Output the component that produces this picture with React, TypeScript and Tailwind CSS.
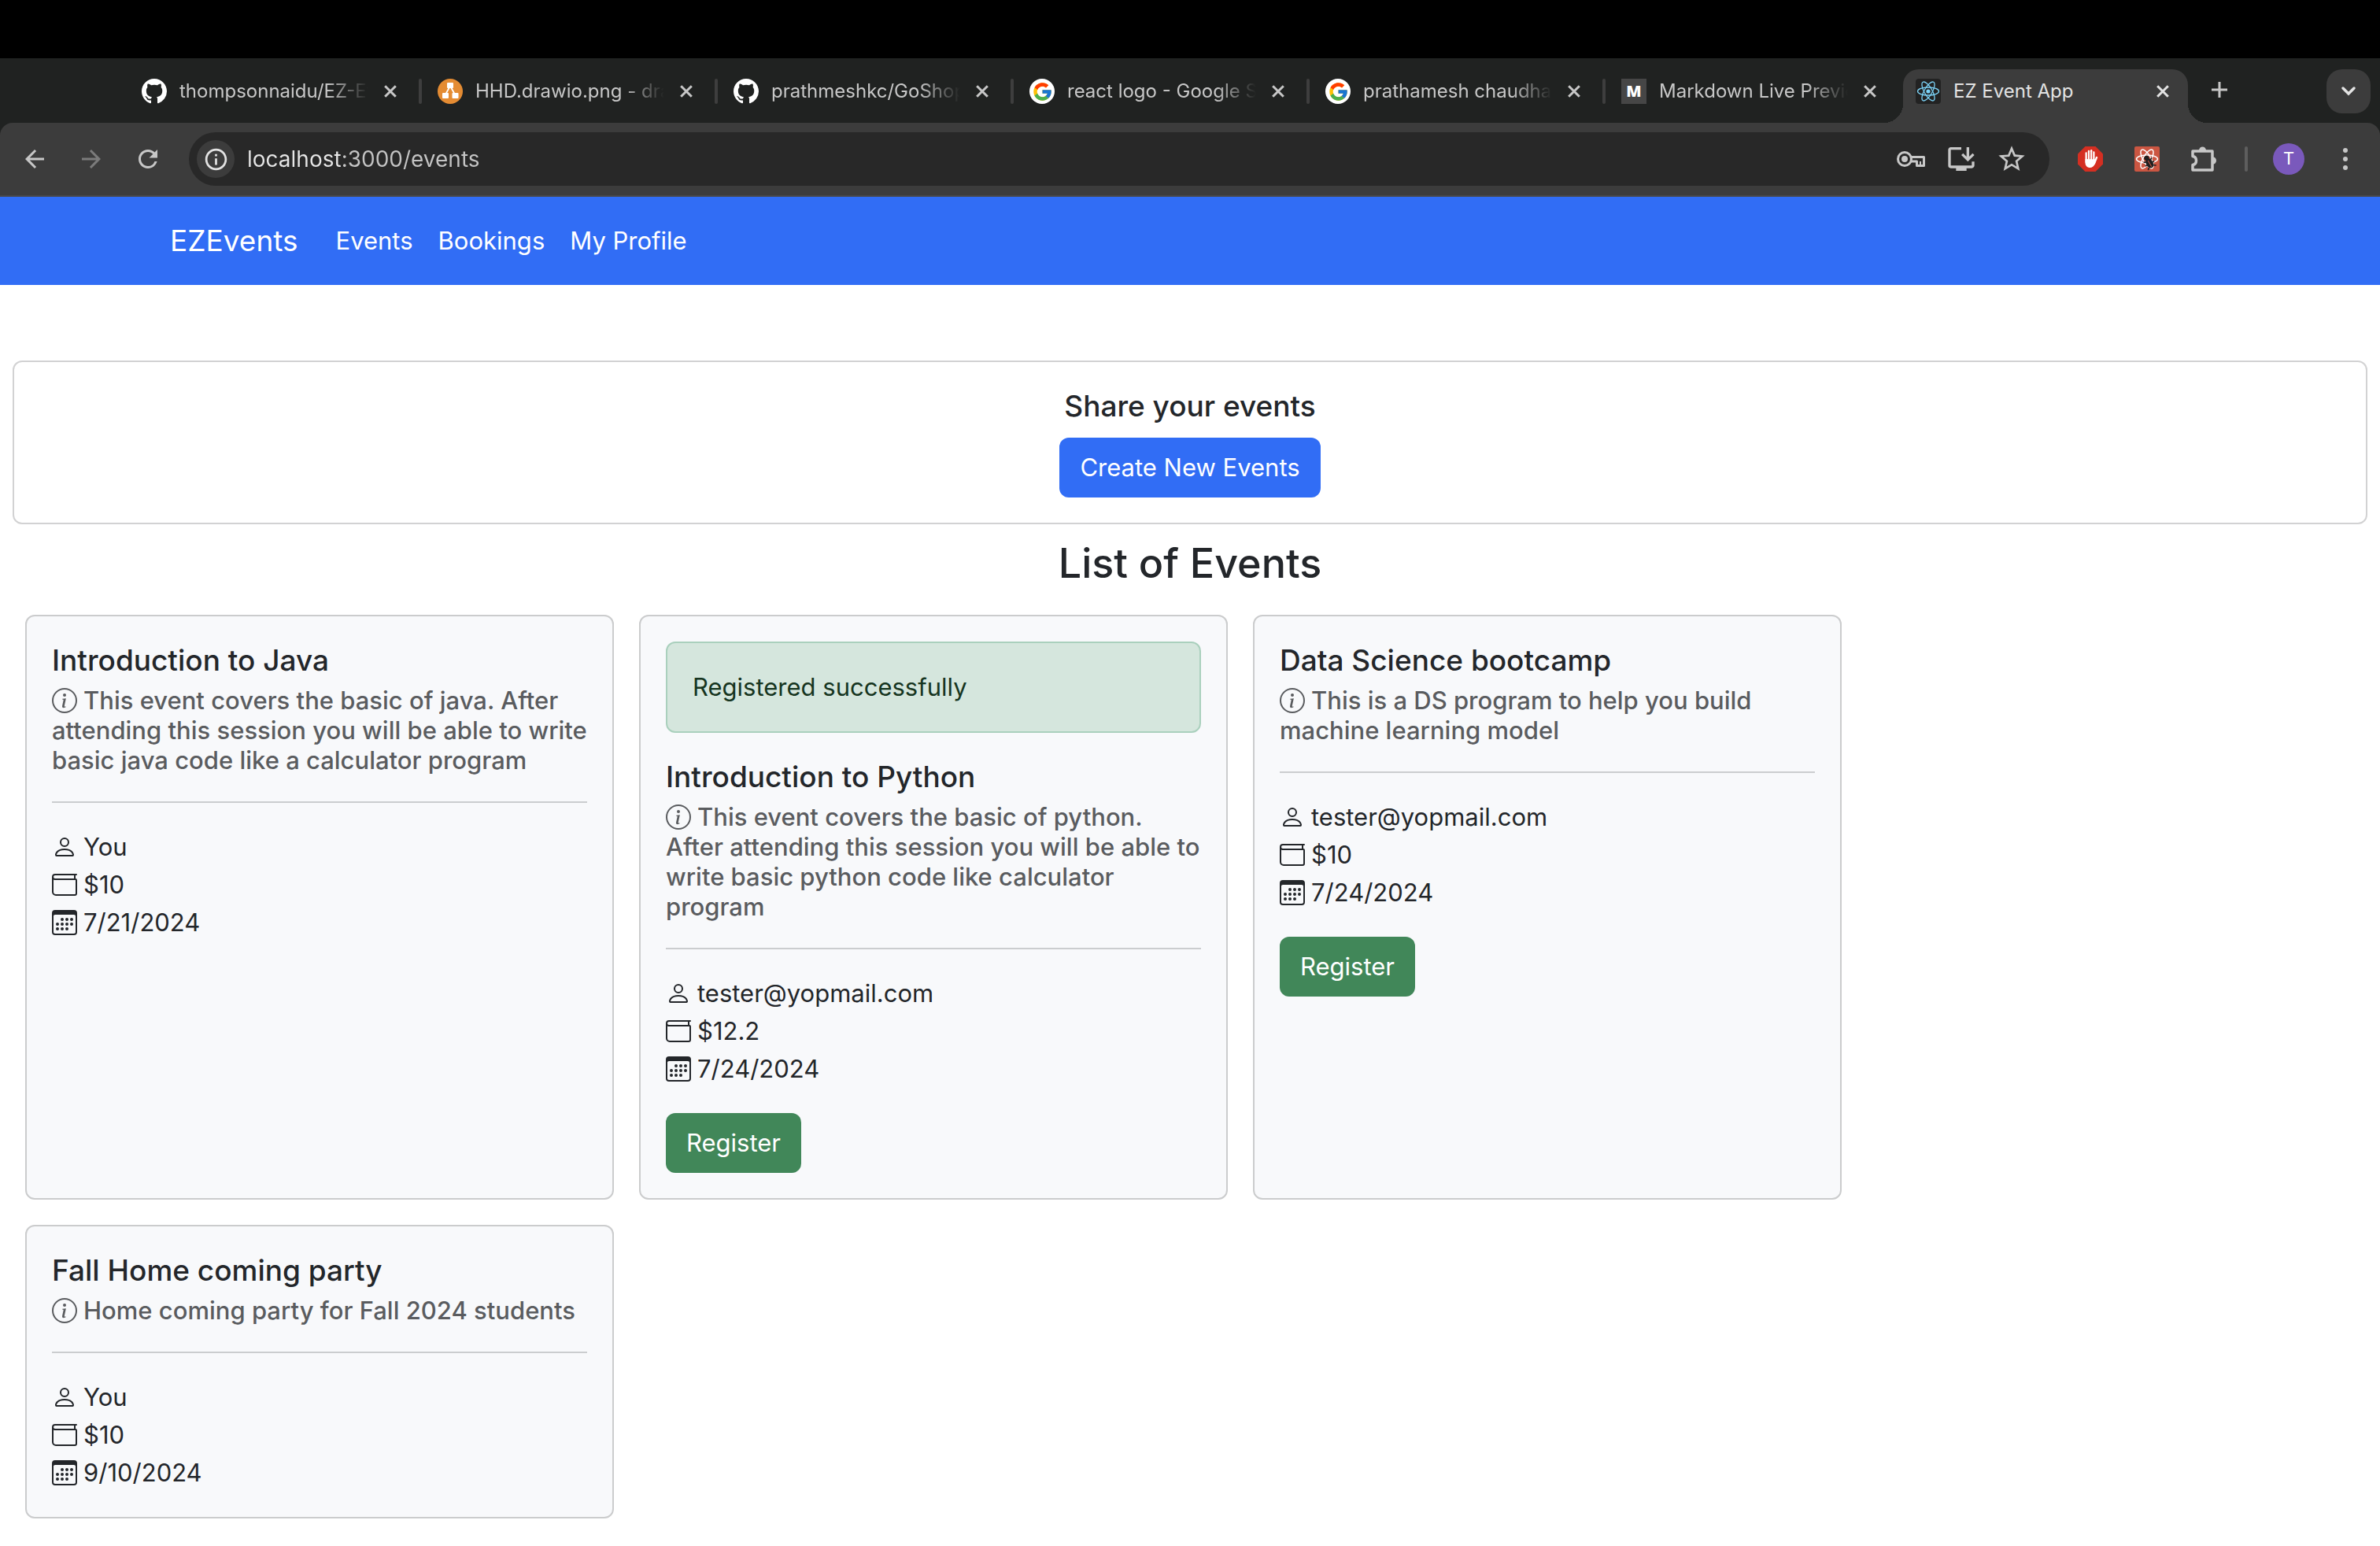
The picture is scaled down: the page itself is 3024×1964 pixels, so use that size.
import type { ReactNode } from "react";
import { BsCalendar3, BsGithub, BsInfoCircle, BsPerson, BsWallet } from "react-icons/bs";
import { FcGoogle } from "react-icons/fc";
import {
  MdArrowBack,
  MdArrowForward,
  MdInfoOutline,
  MdOutlineInstallDesktop,
  MdRefresh,
  MdStarBorder,
} from "react-icons/md";

/* ---------- Icons ---------- */

function Atom({ color, width }: { color: string; width: number }) {
  return (
    <g fill="none" stroke={color} strokeWidth={width}>
      <ellipse cx="16" cy="16" rx="13.5" ry="5" />
      <ellipse cx="16" cy="16" rx="13.5" ry="5" transform="rotate(60 16 16)" />
      <ellipse cx="16" cy="16" rx="13.5" ry="5" transform="rotate(120 16 16)" />
    </g>
  );
}

function ReactIcon() {
  return (
    <svg viewBox="0 0 32 32" className="size-8">
      <rect width="32" height="32" rx="4" fill="#222222" />
      <Atom color="#7cd3f7" width={1.3} />
      <circle cx="16" cy="16" r="2.6" fill="#7cd3f7" />
    </svg>
  );
}

function ReactDevIcon() {
  return (
    <svg viewBox="0 0 32 32" className="size-8">
      <rect width="32" height="32" rx="2" fill="#cb5642" />
      <Atom color="#ffffff" width={1.5} />
      <g transform="rotate(-30 19 21)" fill="#202020" stroke="#202020" strokeWidth="1.6">
        <circle cx="19" cy="14" r="2.4" />
        <ellipse cx="19" cy="21.5" rx="3.6" ry="5.6" />
        <path d="M13 16.5l4 2.500M12.500 22h13M13 28l4-3M25 16.500l-4 2.500M25 28l-4-3" fill="none" />
        <path d="M19 17.500v9" stroke="#cb5642" strokeWidth="1" />
      </g>
    </svg>
  );
}

function DrawioIcon() {
  return (
    <svg viewBox="0 0 32 32" className="size-8">
      <circle cx="16" cy="16" r="16" fill="#e48c33" />
      <path d="M15 11l-5 9M17 11l5 9" stroke="#fff" strokeWidth="1.8" />
      <rect x="12" y="5" width="8" height="7" rx="1" fill="#fff" />
      <rect x="6" y="18" width="8" height="7" rx="1" fill="#fff" />
      <rect x="18.500" y="18" width="8" height="7" rx="1" fill="#fff" />
    </svg>
  );
}

function GoogleIcon() {
  return (
    <span className="flex size-8 items-center justify-center rounded-full bg-white">
      <FcGoogle size={27} />
    </span>
  );
}

function MarkdownIcon() {
  return (
    <span className="flex size-8 items-center justify-center bg-[#464646] font-['Open_Sans'] text-[20px] font-extrabold text-white">
      M
    </span>
  );
}

function AdBlockIcon() {
  return (
    <svg viewBox="0 0 32 32" className="size-8">
      <path d="M9.400 0h13.200L32 9.400v13.200L22.600 32H9.400L0 22.600V9.400z" fill="#d42f22" />
      <path d="M9.500 16v4.500c0 4 2.400 6.500 6 6.500 3 0 4.800-1.600 6-4.500L23 19l-1-2.500z" fill="#fff" />
      <g stroke="#fff" strokeWidth="2.400" strokeLinecap="round" fill="none">
        <path d="M10.700 20V8.500M14 18V6M17.200 18V5.200M20.300 18V7.500M20.800 22l3.200-8" />
      </g>
      <path d="M12.350 8v8M15.600 7v9M18.750 7v9" stroke="#d42f22" strokeWidth="0.700" />
    </svg>
  );
}

function KeyIcon() {
  return (
    <svg viewBox="0 0 36 20" className="h-5 w-9" fill="none" stroke="currentColor" strokeWidth="3">
      <circle cx="10" cy="10" r="8.500" />
      <circle cx="10" cy="10" r="4" fill="currentColor" stroke="none" />
      <path d="M18 7.500H34.500V18.500H25.500V13H18" strokeLinejoin="round" />
      <path d="M30 13v5" strokeWidth="2" />
    </svg>
  );
}

function PuzzleIcon() {
  return (
    <svg
      viewBox="0 0 32 32"
      className="size-8"
      fill="none"
      stroke="currentColor"
      strokeWidth="3.500"
      strokeLinejoin="round"
    >
      <path d="M2 6H27V30H2V23.500C8 22.500 8 13.500 2 12.500Z" />
      <path d="M10 5a4.500 4.500 0 0 1 9 0zM28 13.500a4 4.500 0 0 1 0 9z" fill="currentColor" stroke="none" />
    </svg>
  );
}

function CloseIcon() {
  return (
    <svg viewBox="0 0 16 16" className="size-4" stroke="currentColor" strokeWidth="3">
      <path d="M1.200 1.200l13.600 13.600M14.800 1.200L1.200 14.800" />
    </svg>
  );
}

/* ---------- Browser chrome ---------- */

type Tab = { title: string; icon: ReactNode };

const TABS: Tab[] = [
  { title: "thompsonnaidu/EZ-Events", icon: <BsGithub size={32} className="text-white" /> },
  { title: "HHD.drawio.png - draw.io", icon: <DrawioIcon /> },
  { title: "prathmeshkc/GoShopping", icon: <BsGithub size={32} className="text-white" /> },
  { title: "react logo - Google Search", icon: <GoogleIcon /> },
  { title: "prathamesh chaudhari", icon: <GoogleIcon /> },
  { title: "Markdown Live Preview", icon: <MarkdownIcon /> },
];

function TabStrip() {
  return (
    <div className="flex items-start bg-[#202221] pt-[14px] pl-[164px] text-[24px] text-[#c7c7c7]">
      {TABS.map((tab, i) => (
        <div key={tab.title} className="flex h-14 w-[376px] min-w-0 items-center pr-1 pl-4">
          <span className="shrink-0">{tab.icon}</span>
          <span className="mr-3 ml-4 min-w-0 flex-1 overflow-hidden whitespace-nowrap [mask-image:linear-gradient(to_right,#000_calc(100%-52px),transparent)]">
            {tab.title}
          </span>
          <button aria-label={"Close " + tab.title} className="flex size-8 shrink-0 items-center justify-center">
            <CloseIcon />
          </button>
          <span className={i < TABS.length - 1 ? "ml-5 h-8 w-1 rounded-full bg-[#3e3e3e]" : "ml-5 h-8 w-1"} />
        </div>
      ))}
      <div className="relative -ml-0.5 flex h-[68px] w-[362px] items-center rounded-t-[20px] bg-[#3c3c3c] px-4 pb-3 text-[#e3e3e3]">
        <span className="absolute bottom-0 -left-6 size-6 bg-[radial-gradient(circle_at_0_0,transparent_24px,#3c3c3c_24px)]" />
        <span className="absolute -right-6 bottom-0 size-6 bg-[radial-gradient(circle_at_100%_0,transparent_24px,#3c3c3c_24px)]" />
        <ReactIcon />
        <span className="mx-4 flex-1 whitespace-nowrap">EZ Event App</span>
        <button aria-label="Close EZ Event App" className="flex size-8 items-center justify-center">
          <CloseIcon />
        </button>
      </div>
      <button aria-label="New tab" className="ml-5 flex h-[52px] w-10 items-center justify-center">
        <svg viewBox="0 0 20 20" className="size-5" stroke="currentColor" strokeWidth="3">
          <path d="M10 0v20M0 10h20" />
        </svg>
      </button>
      <button
        aria-label="Search tabs"
        className="mr-3 ml-auto flex size-14 items-center justify-center rounded-[20px] bg-[#3c3c3c] text-[#e3e3e3]"
      >
        <svg viewBox="0 0 18 12" className="h-3 w-[18px]" fill="none" stroke="currentColor" strokeWidth="3.400">
          <path d="M2 2l7 7 7-7" strokeLinecap="round" />
        </svg>
      </button>
    </div>
  );
}

function ToolButton({ label, className = "", children }: { label: string; className?: string; children: ReactNode }) {
  return (
    <button aria-label={label} className={"flex size-14 shrink-0 items-center justify-center " + className}>
      {children}
    </button>
  );
}

function Toolbar() {
  return (
    <div className="bg-[#202221]">
      <div className="flex items-center rounded-t-[16px] border-b-2 border-[#484848] bg-[#3c3c3c] px-4 py-3 text-[#c7c7c7]">
        <div className="flex gap-4">
          <ToolButton label="Back">
            <MdArrowBack size={36} />
          </ToolButton>
          <ToolButton label="Forward" className="text-[#7b7b7b]">
            <MdArrowForward size={36} />
          </ToolButton>
          <ToolButton label="Reload">
            <MdRefresh size={36} />
          </ToolButton>
        </div>
        <div className="mx-6 flex h-[68px] flex-1 items-center rounded-full bg-[#282828] pr-4 pl-[10px]">
          <button
            aria-label="Site information"
            className="flex size-12 items-center justify-center rounded-full bg-[#3c3c3c] text-[#e3e3e3]"
          >
            <MdInfoOutline size={33} />
          </button>
          <input
            aria-label="Address"
            defaultValue="localhost:3000/events"
            className="ml-4 flex-1 bg-[linear-gradient(to_right,#e6e6e6_120px,#c4c4c4_120px)] bg-clip-text text-[28px] text-transparent outline-none"
          />
          <button aria-label="Passwords" className="flex h-14 w-16 items-center justify-center">
            <KeyIcon />
          </button>
          <button aria-label="Install app" className="flex h-14 w-16 items-center justify-center">
            <MdOutlineInstallDesktop size={40} />
          </button>
          <button aria-label="Bookmark this page" className="flex h-14 w-16 items-center justify-center">
            <MdStarBorder size={40} />
          </button>
        </div>
        <div className="flex items-center gap-4">
          <ToolButton label="AdBlock">
            <AdBlockIcon />
          </ToolButton>
          <ToolButton label="React Developer Tools">
            <ReactDevIcon />
          </ToolButton>
          <ToolButton label="Extensions">
            <PuzzleIcon />
          </ToolButton>
          <span className="mx-2 h-8 w-1 rounded-full bg-[#5e5e5e]" />
          <ToolButton label="Profile">
            <span className="flex size-10 items-center justify-center rounded-full bg-[#7a59bc] font-[Roboto] text-[22px] text-white">
              T
            </span>
          </ToolButton>
          <ToolButton label="Menu">
            <svg viewBox="0 0 8 28" className="h-7 w-2" fill="currentColor">
              <circle cx="4" cy="3" r="3" />
              <circle cx="4" cy="14" r="3" />
              <circle cx="4" cy="25" r="3" />
            </svg>
          </ToolButton>
        </div>
      </div>
    </div>
  );
}

/* ---------- Page ---------- */

type EventItem = {
  title: string;
  description: string;
  owner: string;
  price: string;
  date: string;
  notice?: string;
  open?: boolean;
};

const EVENTS: EventItem[] = [
  {
    title: "Introduction to Java",
    description:
      "This event covers the basic of java. After attending this session you will be able to write basic java code like a calculator program",
    owner: "You",
    price: "$10",
    date: "7/21/2024",
  },
  {
    title: "Introduction to Python",
    description:
      "This event covers the basic of python. After attending this session you will be able to write basic python code like calculator program",
    owner: "tester@yopmail.com",
    price: "$12.2",
    date: "7/24/2024",
    notice: "Registered successfully",
    open: true,
  },
  {
    title: "Data Science bootcamp",
    description: "This is a DS program to help you build machine learning model",
    owner: "tester@yopmail.com",
    price: "$10",
    date: "7/24/2024",
    open: true,
  },
  {
    title: "Fall Home coming party",
    description: "Home coming party for Fall 2024 students",
    owner: "You",
    price: "$10",
    date: "9/10/2024",
  },
];

function Detail({ icon, children }: { icon: ReactNode; children: ReactNode }) {
  return (
    <li className="flex items-center gap-2">
      {icon}
      <span>{children}</span>
    </li>
  );
}

function EventCard({ event }: { event: EventItem }) {
  return (
    <article className="w-[748px] rounded-[12px] border-2 border-[#cbcccd] bg-[#f8f9fb] p-8">
      {event.notice && (
        <div role="alert" className="mb-8 rounded-[12px] border-2 border-[#aad0bd] bg-[#d5e6dd] p-8 text-[#16351f]">
          {event.notice}
        </div>
      )}
      <h2 className="mb-2 text-[37px] leading-[48px] font-medium">{event.title}</h2>
      <p className="leading-[38px] font-medium text-[#5a5c5f]">
        <BsInfoCircle size={32} className="mr-2 inline-block align-[-5px]" />
        {event.description}
      </p>
      <hr className="mt-[33px] mb-8 border-t-2 border-[#cbcdcf]" />
      <ul>
        <Detail icon={<BsPerson size={32} />}>{event.owner}</Detail>
        <Detail icon={<BsWallet size={32} />}>{event.price}</Detail>
        <Detail icon={<BsCalendar3 size={32} />}>{event.date}</Detail>
      </ul>
      {event.open && (
        <button className="mt-8 h-[76px] rounded-[12px] bg-[#418759] px-[26px] text-white">Register</button>
      )}
    </article>
  );
}

export default function App() {
  return (
    <div className="min-h-screen bg-white font-['Inter',sans-serif] text-[31px] leading-[48px] text-[#23262a]">
      <div className="h-[74px] bg-black" />
      <TabStrip />
      <Toolbar />
      <nav className="bg-[#316df5] text-white">
        <div className="mx-auto flex h-28 max-w-[2640px] items-center px-6">
          <a href="#home" className="mr-8 text-[37px]">
            EZEvents
          </a>
          <a href="#events" className="px-4">
            Events
          </a>
          <a href="#bookings" className="px-4">
            Bookings
          </a>
          <a href="#profile" className="px-4">
            My Profile
          </a>
        </div>
      </nav>
      <main className="pt-24">
        <section className="mx-4 rounded-[12px] border-2 border-[#d2d2d3] p-8 text-center">
          <h2 className="mb-4 text-[37px] leading-[48px] font-medium">Share your events</h2>
          <button className="mx-auto block h-[76px] rounded-[12px] bg-[#316df5] px-[26px] text-white">
            Create New Events
          </button>
        </section>
        <h1 className="mt-4 text-center text-[52px] leading-[67px] font-medium">List of Events</h1>
        <div className="flex flex-wrap gap-8 px-8 pt-8 pb-8">
          {EVENTS.map((event) => (
            <EventCard key={event.title} event={event} />
          ))}
        </div>
      </main>
    </div>
  );
}
